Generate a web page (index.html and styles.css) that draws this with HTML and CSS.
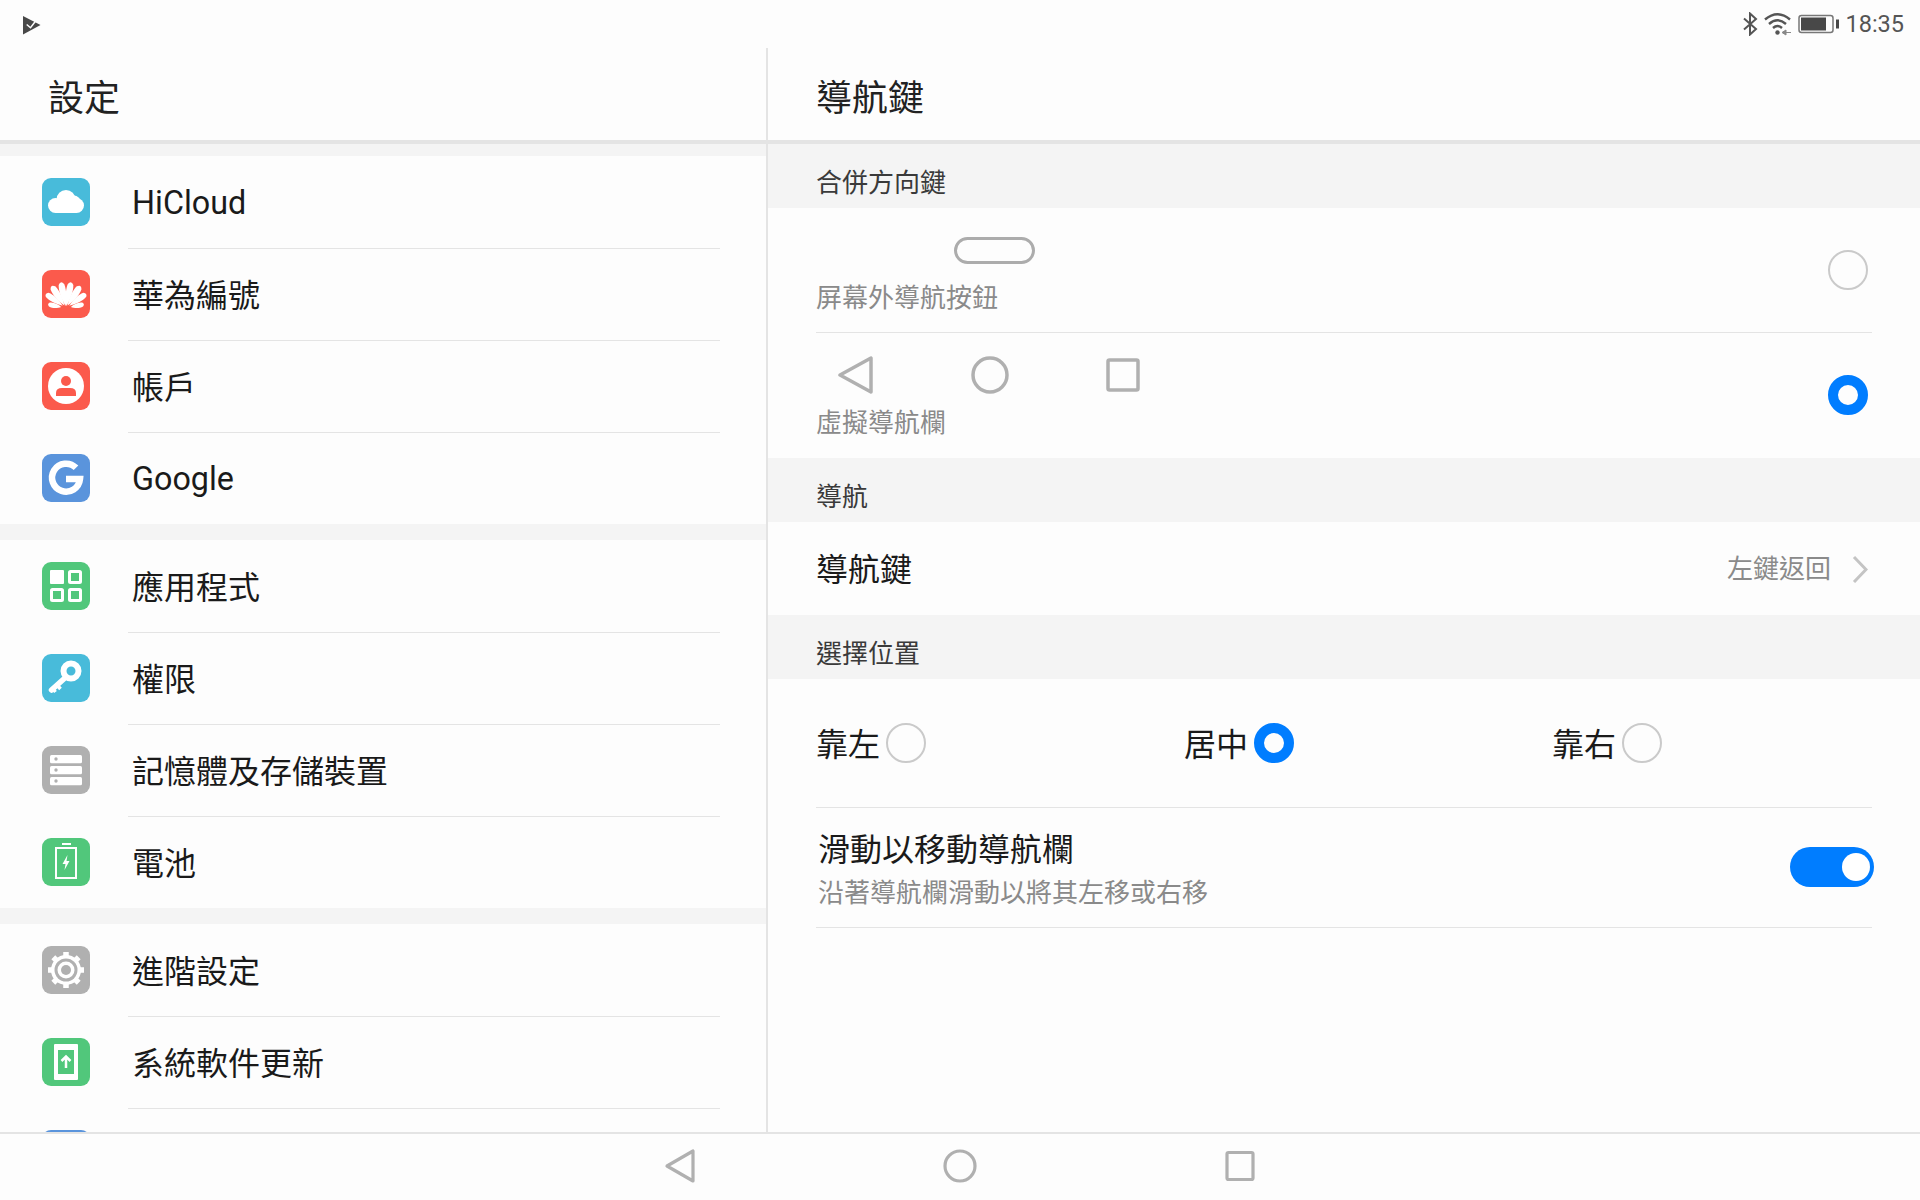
FILE: index.html
```html
<!DOCTYPE html>
<html lang="zh-Hant">
<head>
	<meta charset="utf-8" />
	<title>導航鍵</title>
	<link rel="stylesheet" href="styles.css">
</head>
<body>
<div class="pantalla">

	<div class="status">
		<svg class="s-logo" width="20" height="20" viewBox="0 0 20 20">
			<path d="M2 1 L19.500 10 L2 19.500 Z" fill="#484848"/>
			<path d="M5.700 9.500 L9.500 12.700 L15 5.500" fill="none" stroke="#fdfdfd" stroke-width="1.500"/>
		</svg>
		<div class="status-right">
			<svg width="15" height="24" viewBox="0 0 15 24">
				<path d="M1 6.500 L13 17 L7 22.500 L7 1.500 L13 7 L1 17.500" fill="none" stroke="#555" stroke-width="2"/>
			</svg>
			<svg width="28" height="24" viewBox="0 0 28 24">
				<path d="M1 7.500 Q13.500 -3 26 7.500 M5 12 Q13.500 4.500 22 12 M9 16 Q13.500 12 18 16" fill="none" stroke="#555" stroke-width="2.400"/>
				<circle cx="13.500" cy="20.500" r="2.200" fill="#555"/>
				<path d="M18 20.500 L22 18 L22 23 Z M22 20.500 L27 20.500" fill="#888" stroke="#888" stroke-width="1"/>
			</svg>
			<svg width="42" height="20" viewBox="0 0 42 20">
				<rect x="1" y="1.500" width="34" height="17" rx="2.500" fill="none" stroke="#777" stroke-width="1.500"/>
				<rect x="3" y="3.500" width="25" height="13" fill="#484848"/>
				<rect x="38" y="5.500" width="3" height="9" fill="#484848"/>
			</svg>
			<span class="hora">18:35</span>
		</div>
	</div>

	<div class="contenido">

		<div class="izquierda">
			<div class="titulo">設定</div>
			<div class="lista">

				<div class="grupo">
					<div class="fila">
						<svg class="icono" viewBox="0 0 48 48"><rect width="48" height="48" rx="9" fill="#48bbda"/>
							<g fill="#fff">
								<circle cx="24" cy="21.500" r="9.500"/>
								<circle cx="13.500" cy="27.500" r="7.500"/>
								<circle cx="34.500" cy="27.500" r="7.500"/>
								<circle cx="32" cy="24" r="6.500"/>
								<rect x="13.500" y="26" width="21" height="9"/>
							</g></svg>
						<span class="texto latino">HiCloud</span>
					</div>
					<div class="fila">
						<svg class="icono" viewBox="0 0 48 48"><rect width="48" height="48" rx="9" fill="#fb5a4c"/>
							<g fill="#fff">
								<path transform="rotate(-11 24 38)" d="M24 36 C21.500 30 19.800 20 21.200 14 Q24 9.500 26.800 14 C28.200 20 26.500 30 24 36 Z"/>
								<path transform="rotate(11 24 38)" d="M24 36 C21.500 30 19.800 20 21.200 14 Q24 9.500 26.800 14 C28.200 20 26.500 30 24 36 Z"/>
								<path transform="rotate(-33 24 38)" d="M24 35 C21.500 29 19.800 20 21.200 14 Q24 9.500 26.800 14 C28.200 20 26.500 29 24 35 Z"/>
								<path transform="rotate(33 24 38)" d="M24 35 C21.500 29 19.800 20 21.200 14 Q24 9.500 26.800 14 C28.200 20 26.500 29 24 35 Z"/>
								<path transform="rotate(-55 24 38)" d="M24 34 C21.500 28 20 20 21.500 15 Q24 12 26.500 15 C28 20 26.500 28 24 34 Z"/>
								<path transform="rotate(55 24 38)" d="M24 34 C21.500 28 20 20 21.500 15 Q24 12 26.500 15 C28 20 26.500 28 24 34 Z"/>
								<path transform="rotate(-78 24 38)" d="M24 33 C22 30 20.500 25 22 21 Q24 18.500 26 21 C27.500 25 26 30 24 33 Z"/>
								<path transform="rotate(78 24 38)" d="M24 33 C22 30 20.500 25 22 21 Q24 18.500 26 21 C27.500 25 26 30 24 33 Z"/>
							</g></svg>
						<span class="texto">華為編號</span>
					</div>
					<div class="fila">
						<svg class="icono" viewBox="0 0 48 48"><rect width="48" height="48" rx="9" fill="#fb5a4c"/>
							<circle cx="24" cy="24" r="18" fill="#fff"/>
							<circle cx="24" cy="19" r="5" fill="#fb5a4c"/>
							<path d="M14 34 V31 Q14 26 20 26 H28 Q34 26 34 31 V34 Z" fill="#fb5a4c"/></svg>
						<span class="texto">帳戶</span>
					</div>
					<div class="fila">
						<svg class="icono" viewBox="0 0 48 48"><rect width="48" height="48" rx="9" fill="#5a94dc"/>
							<path d="M34 13.800 A14 14 0 1 0 38 25 H24" fill="none" stroke="#fff" stroke-width="6.500"/></svg>
						<span class="texto latino">Google</span>
					</div>
				</div>

				<div class="grupo">
					<div class="fila">
						<svg class="icono" viewBox="0 0 48 48"><rect width="48" height="48" rx="9" fill="#51c77b"/>
							<rect x="8" y="8" width="14" height="14" rx="1" fill="#fff"/>
							<rect x="27.500" y="9.500" width="11" height="11" rx="1" fill="none" stroke="#fff" stroke-width="3"/>
							<rect x="9.500" y="27.500" width="11" height="11" rx="1" fill="none" stroke="#fff" stroke-width="3"/>
							<rect x="27.500" y="27.500" width="11" height="11" rx="1" fill="none" stroke="#fff" stroke-width="3"/></svg>
						<span class="texto">應用程式</span>
					</div>
					<div class="fila">
						<svg class="icono" viewBox="0 0 48 48"><rect width="48" height="48" rx="9" fill="#48bbda"/>
							<circle cx="29" cy="17" r="7.500" fill="none" stroke="#fff" stroke-width="6"/>
							<path d="M24 23 L9.500 36" fill="none" stroke="#fff" stroke-width="5.500" stroke-linecap="round"/>
							<path d="M15 31 L18.500 35 M11 35 L13.500 38" stroke="#fff" stroke-width="3.500"/></svg>
						<span class="texto">權限</span>
					</div>
					<div class="fila">
						<svg class="icono" viewBox="0 0 48 48"><rect width="48" height="48" rx="9" fill="#b0b0b0"/>
							<g fill="#fff">
								<rect x="8" y="9" width="32" height="8.300" rx="1.500"/>
								<rect x="8" y="20" width="32" height="8.300" rx="1.500"/>
								<rect x="8" y="31" width="32" height="8.300" rx="1.500"/>
							</g>
							<g fill="#b0b0b0">
								<circle cx="14" cy="13" r="1.700"/>
								<circle cx="14" cy="24" r="1.700"/>
								<circle cx="14" cy="35" r="1.700"/>
							</g></svg>
						<span class="texto">記憶體及存儲裝置</span>
					</div>
					<div class="fila">
						<svg class="icono" viewBox="0 0 48 48"><rect width="48" height="48" rx="9" fill="#51c77b"/>
							<rect x="20" y="5" width="9" height="2" fill="#fff"/>
							<rect x="14" y="10" width="20" height="30" fill="none" stroke="#fff" stroke-width="2"/>
							<path d="M25.500 17 L20.500 26 H23.500 L22.500 32 L27.500 23 H24.500 Z" fill="#fff"/></svg>
						<span class="texto">電池</span>
					</div>
				</div>

				<div class="grupo">
					<div class="fila">
						<svg class="icono" viewBox="0 0 48 48"><rect width="48" height="48" rx="9" fill="#b0b0b0"/>
							<g stroke="#fff" stroke-width="5.500">
								<path d="M24 6 V42 M6 24 H42 M11.300 11.300 L36.700 36.700 M36.700 11.300 L11.300 36.700"/>
							</g>
							<circle cx="24" cy="24" r="15" fill="#fff"/>
							<circle cx="24" cy="24" r="11.500" fill="#b0b0b0"/>
							<circle cx="24" cy="24" r="8.500" fill="#fff"/>
							<circle cx="24" cy="24" r="5" fill="#b0b0b0"/></svg>
						<span class="texto">進階設定</span>
					</div>
					<div class="fila">
						<svg class="icono" viewBox="0 0 48 48"><rect width="48" height="48" rx="9" fill="#51c77b"/>
							<rect x="12" y="6" width="24" height="36" rx="1" fill="#fff"/>
							<rect x="16" y="12" width="16" height="24" fill="#51c77b"/>
							<path d="M24 30 V19 M19.500 23 L24 18.500 L28.500 23" fill="none" stroke="#fff" stroke-width="2.500"/></svg>
						<span class="texto">系統軟件更新</span>
					</div>
					<div class="fila">
						<svg class="icono" viewBox="0 0 48 48"><rect width="48" height="48" rx="9" fill="#5a94dc"/></svg>
					</div>
				</div>

			</div>
		</div>

		<div class="derecha">
			<div class="titulo">導航鍵</div>

			<div class="seccion">合併方向鍵</div>
			<div class="opciones">
				<div class="opcion opcion-a">
					<div class="opcion-textos">
						<div class="pastilla"></div>
						<div class="gris">屏幕外導航按鈕</div>
					</div>
					<span class="radio"></span>
				</div>
				<div class="opcion opcion-b">
					<div class="opcion-textos">
						<div class="nav-fila">
							<svg width="38" height="38" viewBox="0 0 38 38"><path d="M33 2 V36 L2 19 Z" fill="none" stroke="#b0b0b0" stroke-width="3.500" stroke-linejoin="round"/></svg>
							<svg width="38" height="38" viewBox="0 0 38 38"><circle cx="19" cy="19" r="17" fill="none" stroke="#b0b0b0" stroke-width="3.500"/></svg>
							<svg width="38" height="38" viewBox="0 0 38 38"><rect x="4" y="4" width="30" height="30" rx="1.500" fill="none" stroke="#b0b0b0" stroke-width="3.500"/></svg>
						</div>
						<div class="gris">虛擬導航欄</div>
					</div>
					<span class="radio activo"></span>
				</div>
			</div>

			<div class="seccion">導航</div>
			<div class="fila-nav">
				<span class="texto">導航鍵</span>
				<div class="valor">
					<span class="gris">左鍵返回</span>
					<svg width="16" height="28" viewBox="0 0 16 28"><path d="M2 2 L14 14.500 L2 27" fill="none" stroke="#c4c4c4" stroke-width="3"/></svg>
				</div>
			</div>

			<div class="seccion">選擇位置</div>
			<div class="bloque">
				<div class="posiciones">
					<div class="pos"><span class="texto">靠左</span><span class="radio"></span></div>
					<div class="pos"><span class="texto">居中</span><span class="radio activo"></span></div>
					<div class="pos"><span class="texto">靠右</span><span class="radio"></span></div>
				</div>
				<div class="deslizar">
					<div class="deslizar-textos">
						<div class="texto">滑動以移動導航欄</div>
						<div class="gris">沿著導航欄滑動以將其左移或右移</div>
					</div>
					<span class="interruptor"><span class="perilla"></span></span>
				</div>
			</div>
		</div>

	</div>

	<div class="barra">
		<svg width="36" height="36" viewBox="0 0 36 36"><path d="M31 3 V33 L5 18 Z" fill="none" stroke="#b0b0b0" stroke-width="3.200" stroke-linejoin="round"/></svg>
		<svg width="36" height="36" viewBox="0 0 36 36"><circle cx="18" cy="18" r="15" fill="none" stroke="#b0b0b0" stroke-width="3.200"/></svg>
		<svg width="36" height="36" viewBox="0 0 36 36"><rect x="5" y="4.500" width="26" height="27" rx="1.500" fill="none" stroke="#b0b0b0" stroke-width="3.200"/></svg>
	</div>

</div>
</body>
</html>
```

FILE: styles.css
```css
html, body {
	margin: 0;
	padding: 0;
}
body {
	background-color: #fdfdfd;
	color: #1a1a1a;
	font-family: Roboto, "Noto Sans CJK TC", sans-serif;
}
.pantalla {
	width: 1920px;
	height: 1200px;
	display: flex;
	flex-direction: column;
	overflow: hidden;
}

/* barra de estado */
.status {
	height: 48px;
	flex: none;
	display: flex;
	align-items: center;
	justify-content: space-between;
	padding: 0 16px 0 21px;
}
.status-right {
	display: flex;
	align-items: center;
	gap: 6px;
}
.s-logo {
	margin-top: 2px;
}
.hora {
	font-size: 23.500px;
	color: #555;
	margin-left: -1px;
}

/* paneles */
.contenido {
	flex: none;
	height: 1084px;
	display: flex;
}
.izquierda {
	width: 768px;
	flex: none;
	box-sizing: border-box;
	border-right: 2px solid #e4e4e4;
	overflow: hidden;
}
.derecha {
	flex: 1;
	min-width: 0;
}
.titulo {
	height: 82px;
	padding: 10px 0 0 48px;
	border-bottom: 4px solid #e4e4e4;
	font-size: 36px;
	line-height: 82px;
	color: #222;
}

/* lista izquierda */
.grupo {
	border-top: 12px solid #f4f4f4;
}
.grupo + .grupo {
	border-top-width: 16px;
}
.fila {
	height: 92px;
	display: flex;
	align-items: center;
	margin-left: 128px;
	margin-right: 46px;
}
.fila + .fila {
	box-shadow: inset 0 1px #e4e4e4;
}
.icono {
	width: 48px;
	height: 48px;
	flex: none;
	margin-left: -86px;
	margin-right: 42px;
}
.texto {
	font-size: 32px;
	line-height: 40px;
	padding-top: 4px;
}
.latino {
	font-size: 32.300px;
	padding-top: 2px;
}

/* panel derecho */
.seccion {
	height: 64px;
	background-color: #f4f4f4;
	font-size: 26px;
	line-height: 78px;
	color: #3a3a3a;
	padding-left: 48px;
	overflow: hidden;
}
.gris {
	font-size: 26px;
	line-height: 32px;
	color: #8a8a8a;
}
.opciones {
	padding: 0 48px;
}
.opcion {
	display: flex;
	align-items: center;
	justify-content: space-between;
	box-sizing: border-box;
	height: 125px;
}
.opcion-a {
	border-bottom: 1px solid #e4e4e4;
}
.opcion-a .opcion-textos {
	padding-top: 10px;
}
.opcion-b .opcion-textos {
	padding-top: 4px;
}
.opcion-b .radio {
	margin-bottom: 1px;
}
.radio {
	display: inline-block;
	width: 40px;
	height: 40px;
	box-sizing: border-box;
	border: 2px solid #cacaca;
	border-radius: 50%;
	flex: none;
}
.opciones .radio {
	margin-right: 4px;
}
.radio.activo {
	border: 10px solid #007dff;
}
.pastilla {
	width: 81px;
	height: 27px;
	box-sizing: border-box;
	border: 3px solid #acacac;
	border-radius: 14px;
	margin: 0 0 18px 138px;
}
.nav-fila {
	display: flex;
	gap: 95px;
	margin: 0 0 13px 22px;
	height: 38px;
}
.fila-nav {
	height: 93px;
	display: flex;
	align-items: center;
	justify-content: space-between;
	padding: 0 52px 0 48px;
}
.fila-nav .texto {
	padding-top: 2px;
}
.valor {
	display: flex;
	align-items: center;
	gap: 21px;
}
.bloque {
	padding: 0 48px;
}
.posiciones {
	height: 128px;
	display: flex;
	align-items: center;
	border-bottom: 1px solid #e4e4e4;
}
.pos {
	flex: 0 0 368px;
	display: flex;
	align-items: center;
	gap: 6px;
}
.pos:last-child {
	flex: none;
}
.deslizar {
	height: 119px;
	display: flex;
	align-items: center;
	justify-content: space-between;
	border-bottom: 1px solid #e4e4e4;
}
.deslizar-textos {
	padding-left: 2px;
}
.deslizar-textos .texto {
	margin-bottom: 7px;
}
.interruptor {
	width: 84px;
	height: 40px;
	margin-right: -2px;
	margin-bottom: 1px;
	background-color: #007dff;
	border-radius: 20px;
	display: flex;
	align-items: center;
	justify-content: flex-end;
	padding-right: 4px;
	box-sizing: border-box;
}
.perilla {
	width: 28px;
	height: 28px;
	background-color: #fff;
	border-radius: 50%;
}

/* barra inferior */
.barra {
	flex: 1;
	border-top: 2px solid #e4e4e4;
	display: flex;
	align-items: center;
	justify-content: center;
	gap: 244px;
	padding-bottom: 3px;
}
```
